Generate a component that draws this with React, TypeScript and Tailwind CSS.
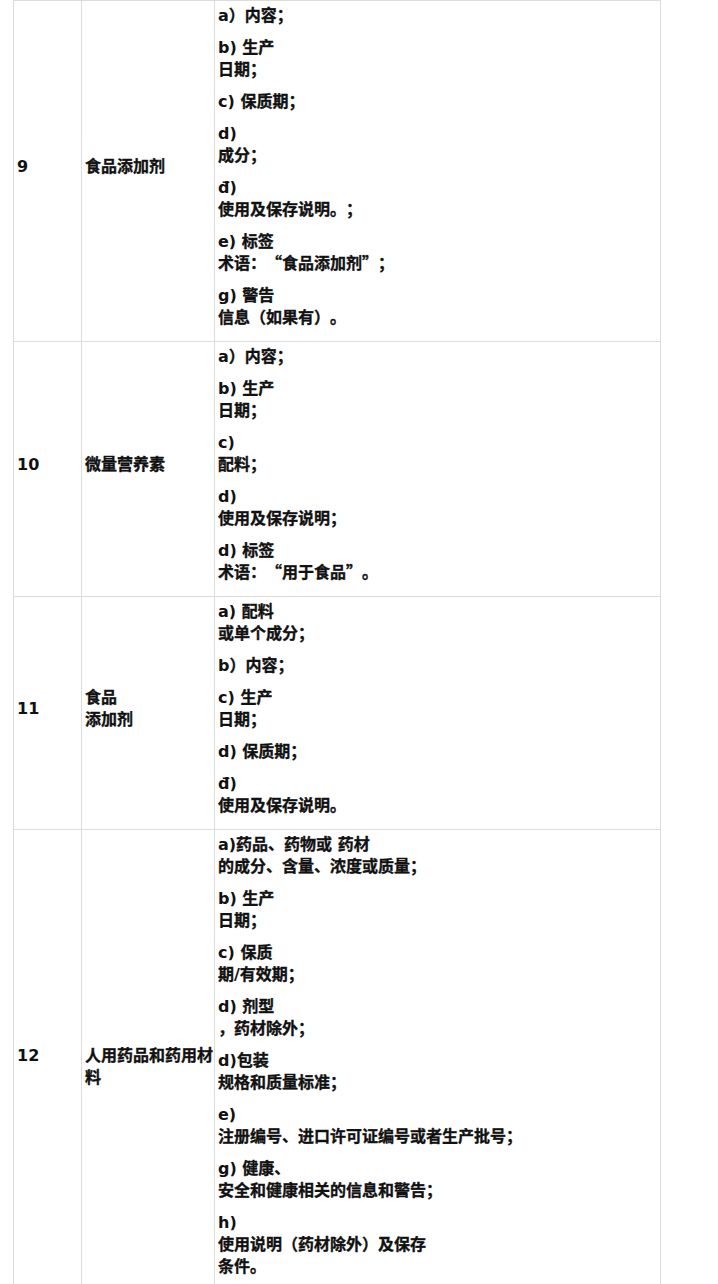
type Row = {
  no: string;
  name: string[];
  nameLead?: boolean;
  items: string[][];
};

const rows: Row[] = [
  {
    no: "9",
    name: ["食品添加剂"],
    items: [
      ["a）内容；"],
      ["b) 生产", "日期；"],
      ["c) 保质期；"],
      ["d)", "成分；"],
      ["đ)", "使用及保存说明。；"],
      ["e) 标签", "术语：“食品添加剂”；"],
      ["g) 警告", "信息（如果有）。"],
    ],
  },
  {
    no: "10",
    name: ["微量营养素"],
    items: [
      ["a）内容；"],
      ["b) 生产", "日期；"],
      ["c)", "配料；"],
      ["d)", "使用及保存说明；"],
      ["d) 标签", "术语：“用于食品”。"],
    ],
  },
  {
    no: "11",
    name: ["食品", "添加剂"],
    items: [
      ["a) 配料", "或单个成分；"],
      ["b）内容；"],
      ["c) 生产", "日期；"],
      ["d) 保质期；"],
      ["đ)", "使用及保存说明。"],
    ],
  },
  {
    no: "12",
    name: ["人用药品和药用材", "料"],
    nameLead: true,
    items: [
      ["a)药品、药物或 药材", "的成分、含量、浓度或质量；"],
      ["b) 生产", "日期；"],
      ["c) 保质", "期/有效期；"],
      ["d) 剂型", "，药材除外；"],
      ["d)包装", "规格和质量标准；"],
      ["e)", "注册编号、进口许可证编号或者生产批号；"],
      ["g) 健康、", "安全和健康相关的信息和警告；"],
      ["h)", "使用说明（药材除外）及保存", "条件。"],
    ],
  },
];

const latin = /^[\x20-\x7E\u0111]+$/;

// Latin runs use a Verdana-like face, everything else the CJK face
function Mixed({ text }: { text: string }) {
  const parts = text.split(/([\x20-\x7E\u0111]+)/).filter(Boolean);
  return (
    <>
      {parts.map((p, i) =>
        latin.test(p) ? (
          <span key={i} style={{ fontFamily: '"DejaVu Sans", sans-serif' }}>
            {p}
          </span>
        ) : (
          <span key={i} className="[-webkit-text-stroke:0.35px_#111]">
            {p}
          </span>
        )
      )}
    </>
  );
}

function Lines({ lines }: { lines: string[] }) {
  return (
    <>
      {lines.map((l, i) => (
        <div key={i} className="h-[22px] whitespace-pre">
          <Mixed text={l} />
        </div>
      ))}
    </>
  );
}

export default function App() {
  return (
    <div
      className="min-h-[1284px] bg-white pl-[13px] text-[16px] font-bold leading-[22px] text-[#111] [text-spacing-trim:space-all]"
      style={{ fontFamily: '"Noto Sans CJK SC", sans-serif' }}
    >
      <table className="w-[647px] table-fixed border-collapse">
        <colgroup>
          <col className="w-[68px]" />
          <col className="w-[133px]" />
          <col className="w-[446px]" />
        </colgroup>
        <tbody>
          {rows.map((row) => (
            <tr key={row.no}>
              <td className="border border-[#dcdcdc] pl-[3px] pb-[12px] align-middle">
                <Lines lines={[row.no]} />
              </td>
              <td
                className={
                  row.nameLead
                    ? "border border-[#dcdcdc] pl-[3px] pr-0 pt-[22px] pb-[12px] align-middle"
                    : "border border-[#dcdcdc] pl-[3px] pr-0 pb-[12px] align-middle"
                }
              >
                <Lines lines={row.name} />
              </td>
              <td className="border border-[#dcdcdc] px-[3px] pt-[2px] pb-[4px] align-top">
                {row.items.map((item, i) => (
                  <div key={i} className="mb-[10px]">
                    <Lines lines={item} />
                  </div>
                ))}
              </td>
            </tr>
          ))}
        </tbody>
      </table>
    </div>
  );
}
